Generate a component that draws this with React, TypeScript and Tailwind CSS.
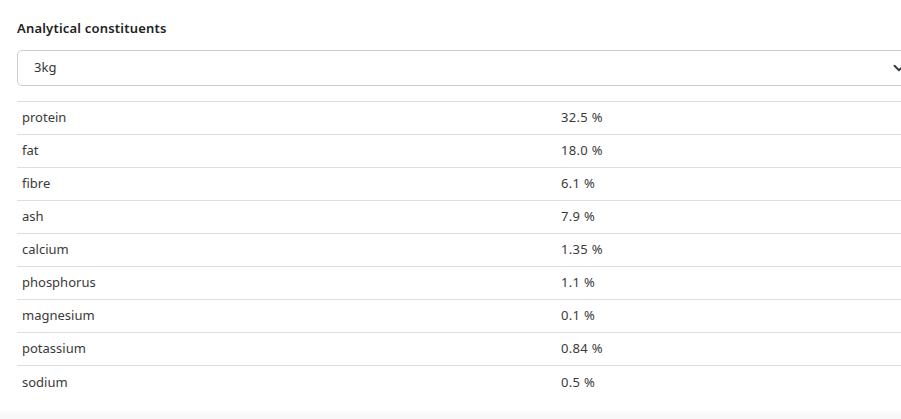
import React from "react";

const rows: [string, string][] = [
  ["protein", "32.5 %"],
  ["fat", "18.0 %"],
  ["fibre", "6.1 %"],
  ["ash", "7.9 %"],
  ["calcium", "1.35 %"],
  ["phosphorus", "1.1 %"],
  ["magnesium", "0.1 %"],
  ["potassium", "0.84 %"],
  ["sodium", "0.5 %"],
];

export default function App() {
  return (
    <div
      className="w-[901px] h-[419px] overflow-hidden bg-white flex flex-col"
      style={{ fontFamily: '"Noto Sans", "Open Sans", sans-serif' }}
    >
      <div className="flex-1 pl-[17px] pt-[19px]">
        <div className="text-[13px] font-semibold tracking-[0.2px] text-[#222] leading-[18px]">Analytical constituents</div>
        <div className="mt-[13px] w-[903px] h-[36px] border border-[#cfcfcf] rounded-[5px] flex items-center justify-between pl-[16px] pr-[12px] text-[13px] text-[#333]">
          <span>3kg</span>
          <svg width="16" height="12" viewBox="0 0 16 16" className="shrink-0">
            <path d="M2 5l6 6 6-6" fill="none" stroke="#343a40" strokeWidth="2.5" strokeLinecap="round" strokeLinejoin="round" />
          </svg>
        </div>
        <div className="mt-[15px] w-[1080px] border-t border-[#dedede]">
          {rows.map(([k, v], i) => (
            <div
              key={k}
              className={`flex h-[33px] items-center text-[13px] text-[#3a3a3a] ${i < rows.length - 1 ? "border-b border-[#dedede]" : ""}`}
            >
              <div className="w-[539px] pl-[5px]">{k}</div>
              <div className="pl-[5px] tracking-[0.3px]">{v}</div>
            </div>
          ))}
        </div>
      </div>
      <div className="h-[8px] bg-gradient-to-b from-[#fdfdfd] to-[#f6f6f6]" />
    </div>
  );
}
